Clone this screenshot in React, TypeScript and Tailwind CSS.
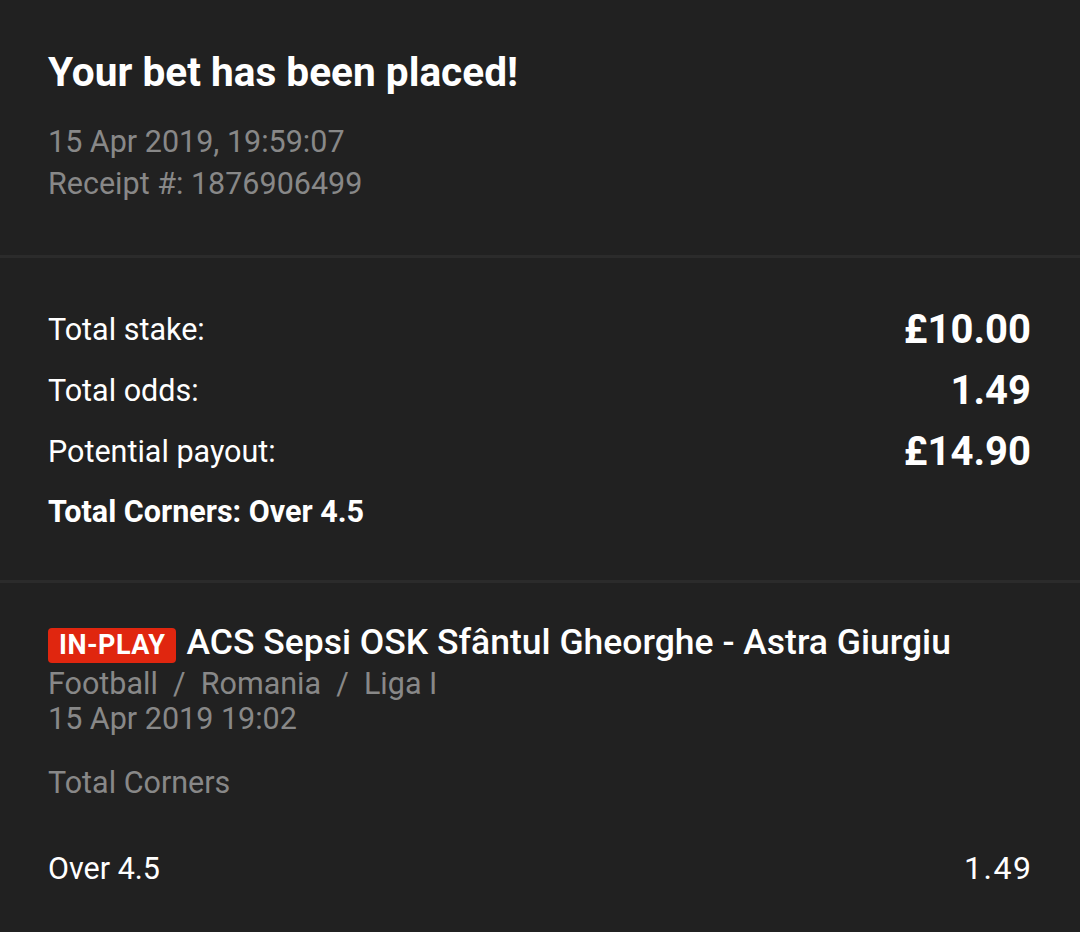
export default function App() {
  const row = (label: string, value: string) => (
    <div key={label} className="flex items-center justify-between h-[61px]">
      <span className="text-[30.5px] text-white">{label}</span>
      <span className="text-[40px] font-bold text-white">{value}</span>
    </div>
  )

  return (
    <div
      className="w-[1080px] h-[932px] bg-[#212121] overflow-hidden"
      style={{ fontFamily: 'Roboto, "Noto Sans", sans-serif' }}
    >
      <div className="pl-12 pr-[49px] pt-[51px] pb-[50px]">
        <h1 className="text-[40.6px] leading-[42px] font-bold text-white">Your bet has been placed!</h1>
        <div className="mt-[28px] text-[30.5px] leading-[42px] text-[#888888]">
          <p>15 Apr 2019, 19:59:07</p>
          <p>Receipt #: 1876906499</p>
        </div>
      </div>

      <div className="h-[3px] bg-[#2b2b2b]" />

      <div className="pl-12 pr-[49px] pt-[41px] pb-[47px]">
        {row('Total stake:', '£10.00')}
        {row('Total odds:', '1.49')}
        {row('Potential payout:', '£14.90')}
        <p className="mt-[9px] text-[30.5px] leading-[42px] font-bold text-white">Total Corners: Over 4.5</p>
      </div>

      <div className="h-[3px] bg-[#2b2b2b]" />

      <div className="pl-12 pr-[49px] pt-[39px]">
        <div className="flex items-start gap-[10px]">
          <span className="mt-[6px] bg-[#e0260f] text-white font-bold text-[27px] leading-[35px] px-[11px] rounded-[4px] tracking-[0.5px]">
            IN-PLAY
          </span>
          <span className="text-[35.5px] leading-[41px] font-medium text-white">
            ACS Sepsi OSK Sfântul Gheorghe - Astra Giurgiu
          </span>
        </div>
        <div className="mt-[3px] text-[30.5px] leading-[35px] text-[#888888]">
          <p>Football&nbsp; / &nbsp;Romania&nbsp; / &nbsp;Liga I</p>
          <p>15 Apr 2019 19:02</p>
        </div>
        <p className="mt-[29px] text-[30.5px] leading-[35px] text-[#888888]">Total Corners</p>
        <div className="mt-[51px] flex items-center justify-between text-[30.5px] leading-[35px] text-white">
          <span>Over 4.5</span>
          <span className="text-[32px] tracking-[1.5px] -mr-[1.5px]">1.49</span>
        </div>
      </div>
    </div>
  )
}
